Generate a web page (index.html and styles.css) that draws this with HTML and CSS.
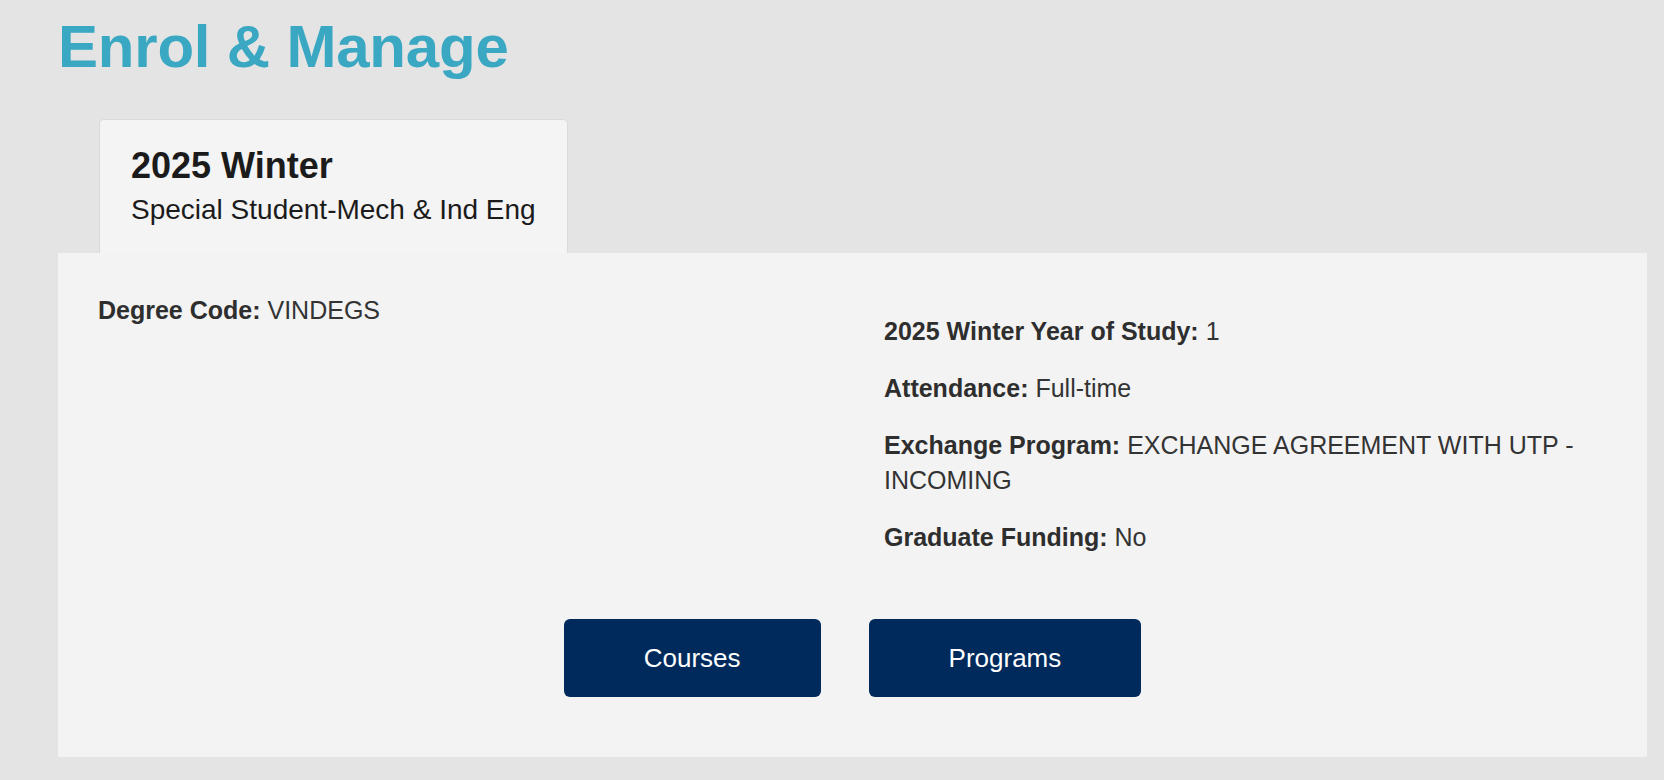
FILE: index.html
```html
<!DOCTYPE html>
<html lang="en">
<head>
<meta charset="utf-8">
<title>Enrol &amp; Manage</title>
<link rel="stylesheet" href="styles.css">
</head>
<body>
<div class="page">
  <h1 class="title">Enrol &amp; Manage</h1>
  <div class="tabs">
    <div class="tab tab-active">
      <div class="tab-title">2025 Winter</div>
      <div class="tab-sub">Special Student-Mech &amp; Ind Eng</div>
    </div>
  </div>
  <section class="panel">
    <div class="details">
      <div class="col col-left">
        <p><span class="label">Degree Code:</span> VINDEGS</p>
      </div>
      <div class="col col-right">
        <p><span class="label">2025 Winter Year of Study:</span> 1</p>
        <p><span class="label">Attendance:</span> Full-time</p>
        <p><span class="label">Exchange Program:</span> <span class="value">EXCHANGE AGREEMENT WITH UTP -</span><br><span class="value">INCOMING</span></p>
        <p><span class="label">Graduate Funding:</span> No</p>
      </div>
    </div>
    <div class="actions">
      <button class="btn" type="button">Courses</button>
      <button class="btn" type="button">Programs</button>
    </div>
  </section>
</div>
</body>
</html>
```
FILE: styles.css
```css
html, body {
  margin: 0;
  padding: 0;
  background: #e4e4e4;
  font-family: "Liberation Sans", Arial, Helvetica, sans-serif;
  color: #1c1c1c;
}

.page {
  padding: 12px 17px 23px 58px;
}

.title {
  margin: 0;
  font-size: 60px;
  font-weight: bold;
  line-height: 69px;
  color: #3aa8c2;
  letter-spacing: -0.2px;
}

.tabs {
  display: flex;
  margin-top: 38px;
  padding-left: 41px;
}

.tab {
  background: #f4f4f4;
  border: 1px solid #dadada;
  border-bottom: none;
  border-radius: 5px 5px 0 0;
  padding: 26px 31px 27px 31px;
}

.tab-title {
  font-size: 36px;
  font-weight: bold;
  line-height: 40px;
  color: #1b1b1b;
  margin-bottom: 8px;
}

.tab-sub {
  font-size: 28px;
  line-height: 32px;
  color: #1b1b1b;
}

.panel {
  background: #f3f3f3;
  padding: 40px 40px 60px 40px;
}

.details {
  display: grid;
  grid-template-columns: 786px 1fr;
  font-size: 25px;
  line-height: 35px;
  color: #333;
}

.col p {
  margin: 0 0 22px 0;
}

.col p:last-child {
  margin-bottom: 0;
}

.col-right {
  padding-top: 21px;
}

.label {
  font-weight: bold;
  color: #2e2e2e;
}

.actions {
  display: flex;
  justify-content: center;
  gap: 48px;
  margin-top: 64px;
}

.btn {
  height: 78px;
  padding: 0 80px;
  border: none;
  border-radius: 6px;
  background: #002a5c;
  color: #ffffff;
  font-family: "Liberation Sans", Arial, Helvetica, sans-serif;
  font-size: 26px;
  cursor: pointer;
}
```
